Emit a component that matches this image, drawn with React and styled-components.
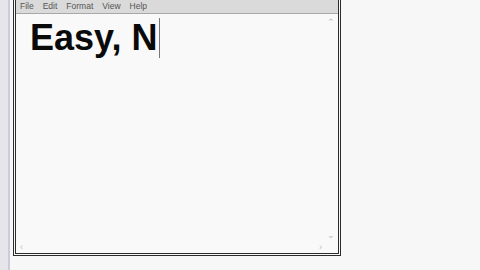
import React from "react";
import styled, { createGlobalStyle } from "styled-components";

const GlobalStyle = createGlobalStyle`
  html, body {
    margin: 0;
    padding: 0;
    background: #f7f7f7;
    font-family: "Liberation Sans", Arial, sans-serif;
  }
`;

const Page = styled.div`
  display: flex;
  width: 480px;
  height: 270px;
  background: #f7f7f7;
  overflow: hidden;
`;

const SideStrip = styled.div`
  width: 8px;
  height: 100%;
  background: #e6e6ea;
  border-right: 2px solid #cbcbdc;
  margin-right: 3px;
`;

const Window = styled.div`
  display: flex;
  flex-direction: column;
  width: 322px;
  height: 253px;
  border: 3px double #2b2b2b;
  border-top: none;
  background: #f9f9f9;
`;

const MenuBar = styled.div`
  display: flex;
  align-items: center;
  gap: 9px;
  height: 13px;
  padding-left: 4px;
  background: #dadada;
  border-bottom: 1px solid #a8a8a8;
  font-size: 8.5px;
  color: #555;
`;

const MenuItem = styled.span`
  line-height: 13px;
`;

const Body = styled.div`
  flex: 1;
  display: flex;
`;

const TextArea = styled.div`
  flex: 1;
  padding: 4px 0 0 14px;
  font-size: 36px;
  font-weight: 700;
  line-height: 40px;
  color: #0a0a0a;
`;

const Caret = styled.span`
  display: inline-block;
  width: 0;
  height: 40px;
  margin-left: 2px;
  border-left: 1px solid #777;
  vertical-align: top;
`;

const VScroll = styled.div`
  width: 14px;
  display: flex;
  flex-direction: column;
  justify-content: space-between;
  align-items: center;
  padding: 4px 0 2px;
  color: #b8b8b8;
  font-size: 9px;
`;

const HScroll = styled.div`
  height: 12px;
  display: flex;
  justify-content: space-between;
  align-items: center;
  padding: 0 16px 0 4px;
  color: #bcbcbc;
  font-size: 9px;
`;

const Arrow = styled.span`
  line-height: 8px;
`;

export default function App() {
  const menus = ["File", "Edit", "Format", "View", "Help"];
  return (
    <Page>
      <GlobalStyle />
      <SideStrip />
      <Window>
        <MenuBar>
          {menus.map((m) => (
            <MenuItem key={m}>{m}</MenuItem>
          ))}
        </MenuBar>
        <Body>
          <TextArea>
            Easy, N
            <Caret />
          </TextArea>
          <VScroll>
            <Arrow>⌃</Arrow>
            <Arrow>⌄</Arrow>
          </VScroll>
        </Body>
        <HScroll>
          <Arrow>‹</Arrow>
          <Arrow>›</Arrow>
        </HScroll>
      </Window>
    </Page>
  );
}
